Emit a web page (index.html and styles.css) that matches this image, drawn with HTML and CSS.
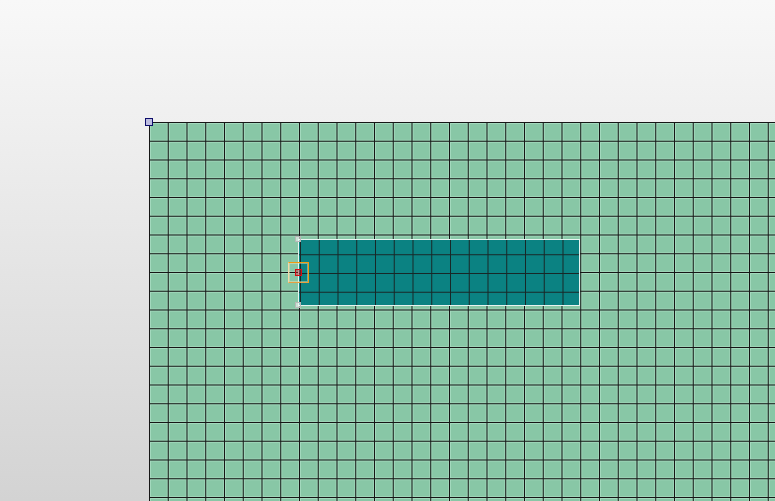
FILE: index.html
```html
<!DOCTYPE html>
<html>
<head>
<meta charset="utf-8">
<link rel="stylesheet" href="styles.css">
</head>
<body>
<div class="stage">
  <div class="board">
    <div class="origin"></div>
    <div class="block"></div>
    <div class="handle handle-top"></div>
    <div class="handle handle-bottom"></div>
    <div class="pivot-outer"></div>
    <div class="pivot-inner"></div>
  </div>
</div>
</body>
</html>
```
FILE: styles.css
```css
html, body {
  margin: 0;
  padding: 0;
  width: 775px;
  height: 501px;
  overflow: hidden;
}
body {
  background: linear-gradient(to bottom, #f8f8f8 0%, #efefef 25%, #e2e2e2 60%, #d3d3d3 100%);
  font-family: "Liberation Sans", sans-serif;
}
.stage {
  display: flex;
  padding: 122px 0 0 149px;
  height: 379px;
}
.board {
  position: relative;
  width: 626px;
  height: 379px;
  background-color: #88c7a6;
  background-image:
    linear-gradient(to right, #151515 0, #151515 1.2px, transparent 1.2px),
    linear-gradient(to bottom, #151515 0, #151515 1.2px, transparent 1.2px),
    linear-gradient(to right, transparent 1.2px, #a4d9bd 1.2px, #a4d9bd 2.2px, transparent 2.2px, transparent 17.75px, #9dd3b6 17.75px),
    linear-gradient(to bottom, transparent 1.2px, #a4d9bd 1.2px, #a4d9bd 2.2px, transparent 2.2px, transparent 17.75px, #9dd3b6 17.75px);
  background-size: 18.75px 18.75px;
}
.origin {
  position: absolute;
  left: -4px;
  top: -4px;
  width: 6px;
  height: 6px;
  border: 1.5px solid #0c0c6a;
  background: #bdbde0;
}
.block {
  position: absolute;
  left: 149px;
  top: 117px;
  width: 280px;
  height: 65px;
  border: 1px solid #e8f4f0;
  background-color: #0b8282;
  background-image:
    linear-gradient(to right, #182626 0, #182626 1.2px, transparent 1.2px),
    linear-gradient(to bottom, #182626 0, #182626 1.2px, transparent 1.2px);
  background-size: 18.75px 18.75px;
  background-position: -17.75px -4.5px;
}
.handle {
  position: absolute;
  left: 146px;
  width: 4px;
  height: 4px;
  border: 1px solid #b8b8b8;
  background: rgba(245, 245, 245, 0.6);
}
.handle-top { top: 114px; }
.handle-bottom { top: 180px; }
.pivot-outer {
  position: absolute;
  left: 139px;
  top: 140px;
  width: 19px;
  height: 19px;
  border: 1px solid #f09a10;
  border-left-color: #f3d9a8;
  border-bottom-color: #e8a040;
  box-shadow: inset 0 0 0 1px rgba(250, 230, 180, 0.45);
}
.pivot-inner {
  position: absolute;
  left: 146px;
  top: 147px;
  width: 5px;
  height: 5px;
  border: 1px solid #d80c14;
  background: rgba(190, 30, 40, 0.45);
}
```
